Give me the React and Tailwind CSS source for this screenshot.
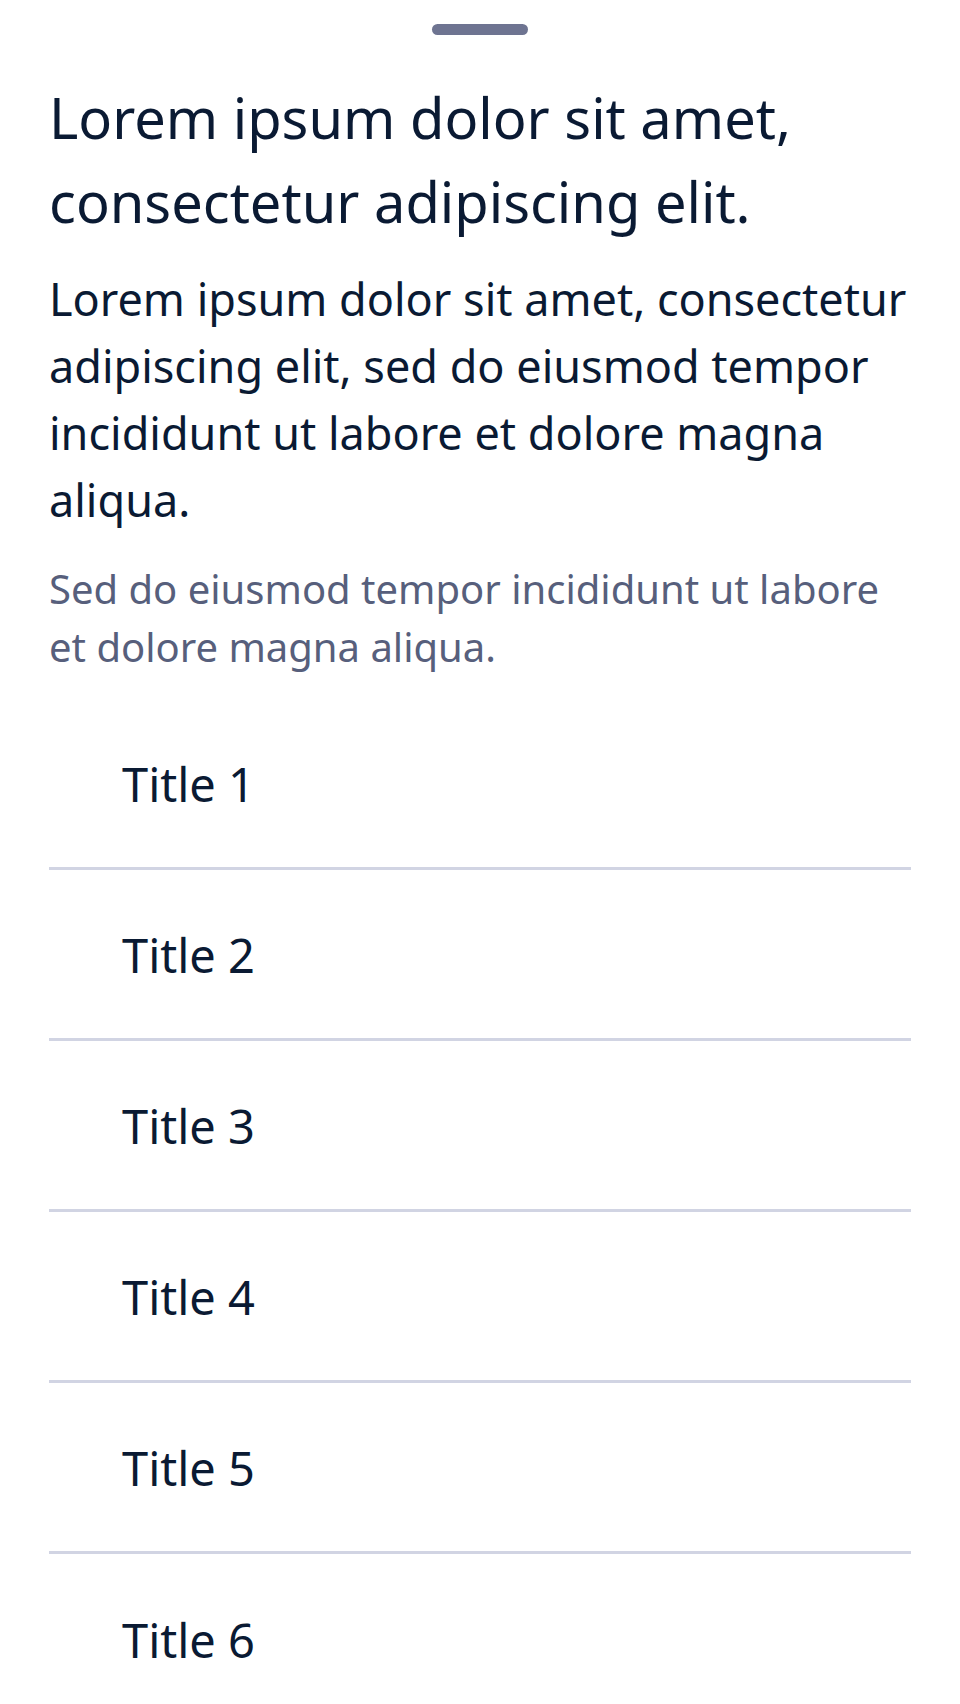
import React from 'react'

const items = ['Title 1', 'Title 2', 'Title 3', 'Title 4', 'Title 5', 'Title 6']

function App() {
  return (
    <div className="min-h-[1704px] bg-white font-['Noto_Sans',sans-serif] text-[#0a1a33]">
      <div className="flex justify-center pt-[24px]">
        <div className="h-[11px] w-[96px] rounded-full bg-[#6e7491]" />
      </div>

      <div className="px-[49px]">
        <h1 className="mt-[40px] text-[56px] leading-[84px] font-normal">
          Lorem ipsum dolor sit amet, consectetur adipiscing elit.
        </h1>
        <p className="mt-[22px] text-[45px] leading-[67px]">
          Lorem ipsum dolor sit amet, consectetur adipiscing elit, sed do eiusmod tempor incididunt ut labore et dolore
          magna aliqua.
        </p>
        <p className="mt-[27px] text-[40px] leading-[58px] text-[#575f7c]">
          Sed do eiusmod tempor incididunt ut labore et dolore magna aliqua.
        </p>

        <ul className="mt-[23px]">
          {items.map((title, i) => (
            <li
              key={title}
              className={
                i < items.length - 1
                  ? 'flex h-[171px] items-center border-b-[3px] border-[#d1d4e3] pl-[73px] pt-[2px]'
                  : 'flex h-[171px] items-center pl-[73px] pt-[2px]'
              }
            >
              <span className="text-[47px] leading-none">{title}</span>
            </li>
          ))}
        </ul>
      </div>
    </div>
  )
}

export default App
